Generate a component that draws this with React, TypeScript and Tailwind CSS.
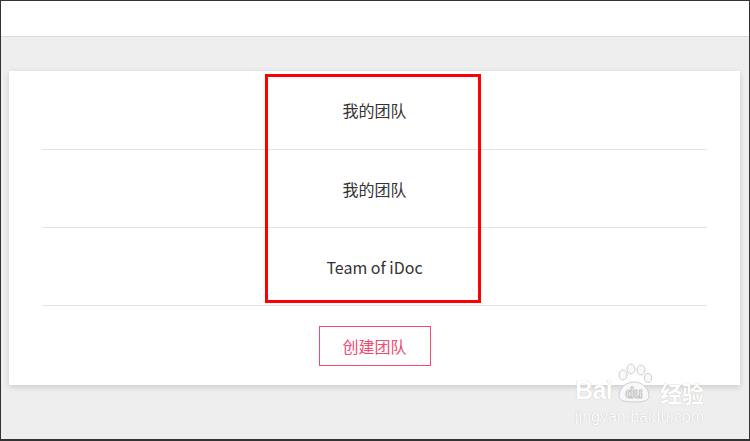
const teams = ["我的团队", "我的团队", "Team of iDoc"];

function Watermark() {
  return (
    <div className="pointer-events-none absolute left-[574px] top-[362px] flex flex-col items-center text-white [text-shadow:0_0_1px_#b0b0b0]">
      <div className="flex items-end leading-none">
        <span className="font-['Liberation_Sans',sans-serif] text-[25px] font-bold tracking-tight">Bai</span>
        <svg width="42" height="40" viewBox="0 0 42 40" className="mx-[1px]">
          <g fill="#f8f8f8" stroke="#c4c4c4" strokeWidth="0.8">
            <ellipse cx="10" cy="12" rx="4" ry="5" />
            <ellipse cx="18" cy="6" rx="4" ry="5" />
            <ellipse cx="28" cy="7" rx="4" ry="5" />
            <ellipse cx="35" cy="15" rx="3.5" ry="4.5" />
            <path d="M6 33c0-8 7-14 15-14s15 6 15 14c0 4-4 6-15 6S6 37 6 33z" />
          </g>
          <text x="21" y="35" textAnchor="middle" fontSize="14" fontWeight="700" fill="#fff" stroke="#bbb" strokeWidth="0.5" fontFamily="Liberation Sans, sans-serif">du</text>
        </svg>
        <span className="ml-1 font-['Noto_Sans_CJK_SC',sans-serif] text-[22px] font-bold">经验</span>
      </div>
      <div className="mt-[6px] font-['Liberation_Sans',sans-serif] text-[16px] leading-none">jingyan.baidu.com</div>
    </div>
  );
}

export default function App() {
  return (
    <div className="relative h-[441px] w-[750px] overflow-hidden border border-b-2 border-[#333] bg-[#eeeeee] font-['Noto_Sans_CJK_SC','Noto_Sans',sans-serif]">
      <div className="h-[36px] border-b border-[#dcdcdc] bg-white" />
      <div className="pl-2 pr-[9px] pt-[34px]">
        <div className="bg-white px-[33px] pb-[19px] shadow-[0_2px_6px_rgba(0,0,0,0.15)]">
          {teams.map((t, i) => (
            <div key={i} className="flex h-[78px] items-center justify-center border-b border-[#e3e3e3] text-[16px] text-[#333] first:h-[79px]">
              {t}
            </div>
          ))}
          <div className="flex justify-center pt-[20px]">
            <button className="h-[40px] w-[112px] border border-[#f34a70] text-[16px] text-[#f34a70]">创建团队</button>
          </div>
        </div>
      </div>
      <div className="pointer-events-none absolute left-[264px] top-[73px] h-[229px] w-[216px] border-[3px] border-[#ff0000]" />
      <Watermark />
    </div>
  );
}
